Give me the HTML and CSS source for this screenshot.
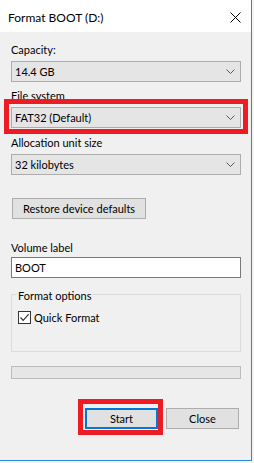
FILE: index.html
```html
<!DOCTYPE html>
<html>
<head>
    <meta charset="UTF-8">
    <title>Format BOOT (D:)</title>
    <link rel="stylesheet" href="styles.css">
</head>
<body>
<div class="dialog">
    <div class="titlebar">
        <span class="title">Format BOOT (D:)</span>
        <svg class="close-x" width="11" height="11" viewBox="0 0 11 11">
            <path d="M0.5 0.5L10.5 10.5M10.5 0.5L0.5 10.5" stroke="#000" stroke-width="1" fill="none"/>
        </svg>
    </div>

    <div class="content">
        <div class="field field-capacity">
            <div class="label">Capacity:</div>
            <div class="combo">
                <span>14.4 GB</span>
                <svg class="chevron" width="9" height="5" viewBox="0 0 9 5"><path d="M0.5 0.5L4.5 4.5L8.5 0.5" stroke="#5a5a5a" fill="none"/></svg>
            </div>
        </div>

        <div class="field field-fs">
            <div class="label">File system</div>
            <div class="combo">
                <span>FAT32 (Default)</span>
                <svg class="chevron" width="9" height="5" viewBox="0 0 9 5"><path d="M0.5 0.5L4.5 4.5L8.5 0.5" stroke="#5a5a5a" fill="none"/></svg>
                <span class="mark mark-fs"></span>
            </div>
        </div>

        <div class="field field-alloc">
            <div class="label">Allocation unit size</div>
            <div class="combo">
                <span>32 kilobytes</span>
                <svg class="chevron" width="9" height="5" viewBox="0 0 9 5"><path d="M0.5 0.5L4.5 4.5L8.5 0.5" stroke="#5a5a5a" fill="none"/></svg>
            </div>
        </div>

        <button class="btn btn-restore">Restore device defaults</button>

        <div class="field field-volume">
            <div class="label">Volume label</div>
            <div class="textbox">BOOT</div>
        </div>

        <fieldset class="options">
            <legend>Format options</legend>
            <div class="check-row">
                <span class="checkbox">
                    <svg width="11" height="11" viewBox="0 0 11 11"><path d="M1.5 5.5L4.2 8.3L9.7 2.2" stroke="#333" stroke-width="1.2" fill="none"/></svg>
                </span>
                <span>Quick Format</span>
            </div>
        </fieldset>

        <div class="progress"></div>

        <div class="actions">
            <button class="btn btn-start">Start<span class="mark mark-start"></span></button>
            <button class="btn btn-close">Close</button>
        </div>
    </div>
</div>
</body>
</html>
```

FILE: styles.css
```css
html, body{
    margin: 0;
    padding: 0;
}

body{
    background: #f4f4f4;
    font: 11px "Lato", "Noto Sans", sans-serif;
    color: #000;
}

.dialog{
    width: 251px;
    height: 460px;
    background: #f0f0f0;
    border-right: 1px solid #2b86d6;
    border-bottom: 1px solid #2b86d6;
}

.titlebar{
    height: 32px;
    box-sizing: border-box;
    padding: 2px 10px 0 8px;
    background: #fff;
    display: flex;
    align-items: center;
    justify-content: space-between;
}
.title{
    font-size: 12px;
    line-height: 15px;
}
.close-x{
    display: block;
}

.content{
    padding: 0 10px 0 11px;
}

.label{
    line-height: 15px;
    margin-bottom: 4px;
}
.field-capacity{
    margin-top: 10px;
}
.field-fs{
    margin-top: 6px;
}
.field-alloc{
    margin-top: 7px;
}
.field-volume{
    margin-top: 21px;
}
.field-volume .label{
    margin-bottom: 2px;
}

.combo{
    position: relative;
    height: 21px;
    box-sizing: border-box;
    border: 1px solid #adadad;
    background: #e5e5e5;
    padding: 0 5px 0 3px;
    display: flex;
    align-items: center;
    justify-content: space-between;
}
.chevron{
    display: block;
}

.textbox{
    height: 21px;
    box-sizing: border-box;
    border: 1px solid #7a7a7a;
    background: #fff;
    padding: 0 3px;
    display: flex;
    align-items: center;
}

.btn{
    font: inherit;
    color: #000;
    height: 21px;
    box-sizing: border-box;
    border: 1px solid #adadad;
    background: #e1e1e1;
    padding: 0;
    margin: 0;
    display: block;
}
.btn-restore{
    margin: 23px 0 0 1px;
    width: 134px;
}

.options{
    margin: 9px 0 0;
    padding: 9px 6px 27px;
    border: 1px solid #dcdcdc;
    min-width: 0;
}
.options legend{
    padding: 3px 1px 0;
    margin-left: -1px;
    line-height: 12px;
}
.check-row{
    height: 13px;
    display: flex;
    align-items: center;
    gap: 3px;
}
.checkbox{
    width: 13px;
    height: 13px;
    box-sizing: border-box;
    border: 1px solid #333;
    background: #fff;
    display: block;
}
.checkbox svg{
    display: block;
}

.progress{
    margin-top: 14px;
    height: 13px;
    box-sizing: border-box;
    border: 1px solid #bcbcbc;
    background: #e6e6e6;
}

.actions{
    margin-top: 29px;
    padding-right: 2px;
    display: flex;
    justify-content: flex-end;
    gap: 8px;
}
.btn-start, .btn-close{
    width: 73px;
}
.btn-start{
    position: relative;
    border: 2px solid #0078d7;
}

/* red marks drawn over the screenshot */
.mark{
    position: absolute;
    border: 5px solid #ed1c24;
    pointer-events: none;
}
.mark-fs{
    top: -9px;
    bottom: -7px;
    left: -8px;
    right: -8px;
}
.mark-start{
    top: -11px;
    bottom: -8px;
    left: -9px;
    right: -7px;
}
```
